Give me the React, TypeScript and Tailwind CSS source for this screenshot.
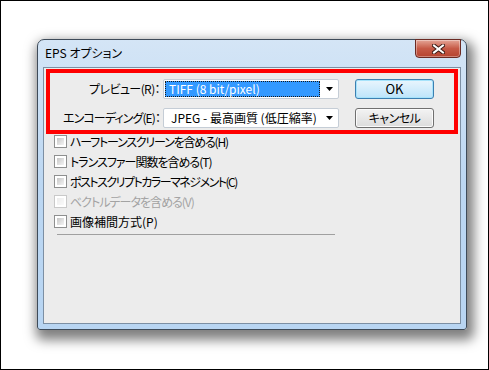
import React from "react";

const jp = "font-['Noto_Sans_CJK_JP','Liberation_Sans',sans-serif] [font-feature-settings:'palt']";

function Checkbox({ label, track, disabled }: { label: string; track: string; disabled?: boolean }) {
  return (
    <div className="flex items-center h-[13px] gap-[3px]">
      <div
        className={
          "w-[13px] h-[13px] border p-[2px] bg-white " +
          (disabled ? "border-[#c9c9c9]" : "border-[#8e8f8f]")
        }
      >
        <div
          className={
            "w-full h-full bg-gradient-to-br " +
            (disabled ? "from-[#ececec] to-[#fafafa]" : "from-[#c6c6c6] to-[#f4f4f4]")
          }
        />
      </div>
      <span className={"text-[12px] leading-[16px] " + track + " " + (disabled ? "text-[#a3a3a3]" : "text-black")}>
        {label}
      </span>
    </div>
  );
}

function Combo({ value, selected }: { value: string; selected?: boolean }) {
  return (
    <div className="w-[176px] h-[20px] bg-white border border-[#c5cdd6] rounded-[2px] flex items-center pl-[1px]">
      {selected ? (
        <div className="h-[16px] w-[155px] bg-[#3399ff] border border-dotted border-[#1a1a1a] flex items-center pl-[3px] text-white">
          {value}
        </div>
      ) : (
        <div className="h-[16px] w-[155px] flex items-center pl-[6px] text-black">{value}</div>
      )}
      <div className="flex-1 flex justify-center">
        <svg width="7" height="4" viewBox="0 0 7 4">
          <path d="M0 0h7L3.5 4z" fill="#000" />
        </svg>
      </div>
    </div>
  );
}

export default function App() {
  return (
    <div className={"w-[489px] h-[370px] bg-white border border-black pt-[38px] pl-[36px] " + jp}>
      <div className="w-[430px] h-[291px] flex flex-col rounded-t-[7px] rounded-b-[3px] border border-[#3e4b59] bg-gradient-to-b from-[#d4e5f6] via-[#bcd7f2] to-[#b8d5f2] shadow-[3px_6px_12px_4px_rgba(0,0,0,0.5)]">
        <div className="h-[27px] flex justify-between pl-[7px]">
          <span className="text-[12px] leading-[16px] pt-[5px] text-black">EPS オプション</span>
          <div className="w-[46px] h-[19px] -mt-[1px] mr-[5px] rounded-b-[4px] border border-[#6b2a23] bg-gradient-to-b from-[#e4a597] via-[#c65a47] to-[#b5432f] shadow-[inset_0_0_0_1px_rgba(255,255,255,0.35)] flex items-center justify-center">
            <svg width="13" height="10" viewBox="0 0 13 10">
              <path d="M2 1.5l9 7M11 1.5l-9 7" stroke="#3b1a14" strokeWidth="4" strokeLinecap="square" />
              <path d="M2 1.5l9 7M11 1.5l-9 7" stroke="#fff" strokeWidth="2" strokeLinecap="square" />
            </svg>
          </div>
        </div>
        <div className="flex-1 mx-[5px] mb-[5px] border border-[#7c8fa3] bg-[#ececec] flex flex-col">
          <div className="mx-[2px] mt-[1px] border-[4px] border-[#ff0000] pt-[6px] pb-[2px] grid grid-cols-[110px_176px_92px] gap-x-[3px] gap-y-[9px] text-[12px] leading-[16px]">
            <div className="h-[20px] flex items-center justify-end tracking-[-0.6px]">プレビュー(R)：</div>
            <Combo value="TIFF (8 bit/pixel)" selected />
            <div className="ml-[13px] h-[20px] rounded-[3px] border border-[#3c7fb1] bg-gradient-to-b from-[#e9f5fd] to-[#bde4fa] shadow-[inset_0_0_0_1px_#a6e3fb] flex items-center justify-center text-[13px]">
              OK
            </div>
            <div className="h-[20px] flex items-center justify-end tracking-[-0.9px]">エンコーディング(E)：</div>
            <Combo value="JPEG - 最高画質 (低圧縮率)" />
            <div className="ml-[13px] h-[20px] rounded-[3px] border border-[#707070] bg-gradient-to-b from-[#f3f3f3] to-[#dcdcdc] shadow-[inset_0_0_0_1px_#fbfbfb] flex items-center justify-center tracking-[-0.5px]">
              キャンセル
            </div>
          </div>
          <div className="flex flex-col gap-[7px] pt-[1px] pl-[10px]">
            <Checkbox label="ハーフトーンスクリーンを含める(H)" track="tracking-[-1.2px]" />
            <Checkbox label="トランスファー関数を含める(T)" track="tracking-[-1px]" />
            <Checkbox label="ポストスクリプトカラーマネジメント(C)" track="tracking-[-1.5px]" />
            <Checkbox label="ベクトルデータを含める(V)" track="tracking-[-1px]" disabled />
            <Checkbox label="画像補間方式(P)" track="tracking-normal" />
          </div>
          <div className="ml-[13px] mt-[6px] w-[278px] h-[1px] bg-[#a0a0a0]" />
        </div>
      </div>
    </div>
  );
}
